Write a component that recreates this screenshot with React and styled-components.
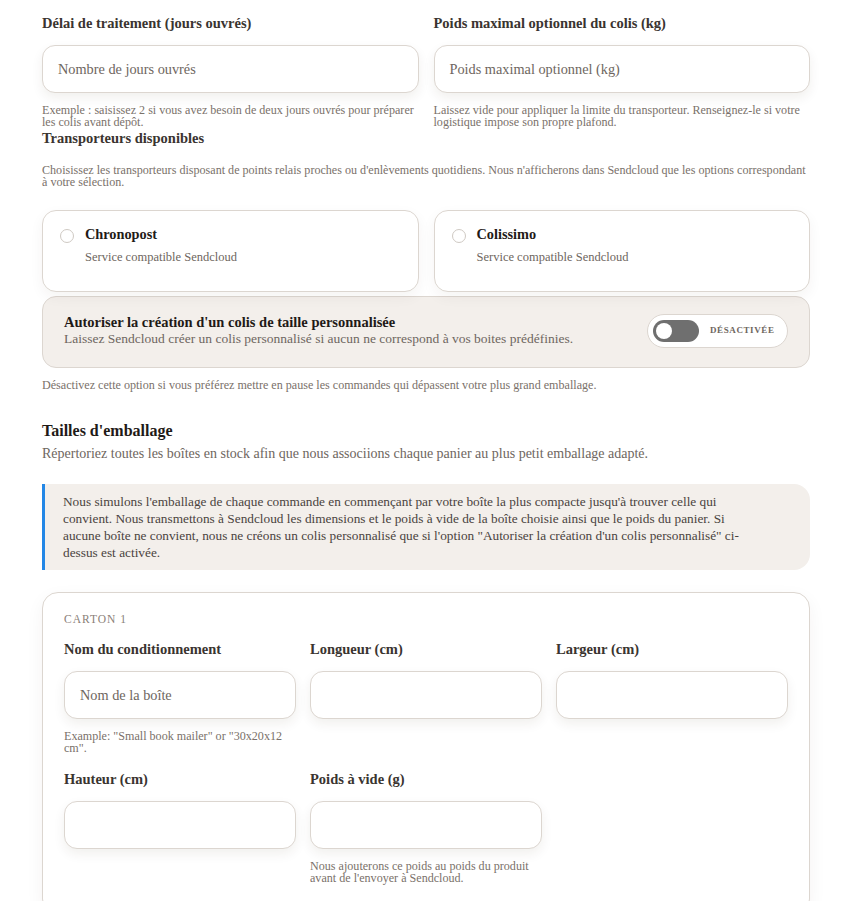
import React from "react";
import styled, { createGlobalStyle } from "styled-components";

const Global = createGlobalStyle`
  html, body { margin: 0; padding: 0; background: #ffffff; }
  body { font-family: "Liberation Serif", "DejaVu Serif", serif; color: #3a3430; }
  * { box-sizing: border-box; }
`;

const Page = styled.div`
  width: 768px;
  margin-left: 42px;
  padding-top: 14px;
  padding-bottom: 40px;
`;

const TwoCols = styled.div`
  display: grid;
  grid-template-columns: 1fr 1fr;
  column-gap: 15px;
  margin-top: ${(p) => p.$mt || 0}px;
`;

const Field = styled.div`
  display: flex;
  flex-direction: column;
`;

const Label = styled.div`
  font-size: 14.5px;
  font-weight: 700;
  color: #3a3430;
  line-height: 18px;
  margin-bottom: 13px;
`;

const Input = styled.div`
  height: 48px;
  border: 1px solid #dcd6d0;
  border-radius: 13px;
  background: #fff;
  box-shadow: 0 5px 12px rgba(60, 40, 20, 0.07);
  display: flex;
  align-items: center;
  padding: 0 15px;
  font-size: 14.3px;
  color: #6e6660;
`;

const Help = styled.div`
  font-size: 12.1px;
  line-height: 12px;
  color: #7a716a;
  margin-top: ${(p) => p.$mt ?? 11}px;
`;

const SectionLabel = styled.div`
  font-size: 14.5px;
  font-weight: 700;
  color: #3a3430;
  line-height: 18px;
  margin-top: 1px;
`;

const Carrier = styled.div`
  height: 82px;
  border: 1px solid #dcd6d0;
  border-radius: 14px;
  background: #fff;
  box-shadow: 0 5px 14px rgba(60, 40, 20, 0.05);
  display: flex;
  align-items: flex-start;
  padding: 15px 17px;
  gap: 11px;
`;

const Radio = styled.span`
  width: 14px;
  height: 14px;
  border-radius: 50%;
  border: 1px solid #cfc9c3;
  background: #fff;
  flex: none;
  margin-top: 3px;
`;

const CarrierText = styled.div`
  display: flex;
  flex-direction: column;
`;

const CarrierName = styled.div`
  font-size: 14.3px;
  font-weight: 700;
  color: #1f1a17;
  line-height: 17px;
`;

const CarrierSub = styled.div`
  font-size: 12.5px;
  color: #6e6660;
  margin-top: 7px;
  line-height: 15px;
`;

const TogglePanel = styled.div`
  margin-top: 4px;
  height: 72px;
  border: 1px solid #dcd6d0;
  border-radius: 14px;
  background: #f3efeb;
  display: flex;
  align-items: center;
  justify-content: space-between;
  padding: 0 21px;
`;

const ToggleBody = styled.div`
  padding-bottom: 3px;
`;

const ToggleTitle = styled.div`
  font-size: 14.5px;
  font-weight: 700;
  color: #1f1a17;
  line-height: 17px;
`;

const ToggleDesc = styled.div`
  font-size: 13.5px;
  color: #6e6660;
  line-height: 16px;
`;

const SwitchPill = styled.div`
  width: 141px;
  height: 34px;
  border: 1px solid #dcd6d0;
  border-radius: 17px;
  background: #fff;
  display: flex;
  align-items: center;
  padding: 0 5px;
  gap: 11px;
  margin-top: -2px;
`;

const Track = styled.span`
  width: 46px;
  height: 22px;
  border-radius: 11px;
  background: #6f6f6f;
  position: relative;
  flex: none;
`;

const Knob = styled.span`
  position: absolute;
  left: 3px;
  top: 3px;
  width: 16px;
  height: 16px;
  border-radius: 50%;
  background: #fff;
`;

const SwitchText = styled.span`
  font-size: 9px;
  font-weight: 700;
  letter-spacing: 0.6px;
  color: #6e6660;
  margin-top: -2px;
`;

const SectionTitle = styled.h2`
  margin: 30px 0 0;
  font-size: 16px;
  font-weight: 700;
  color: #1f1a17;
  line-height: 20px;
`;

const SectionDesc = styled.div`
  font-size: 14px;
  color: #6e6660;
  margin-top: 5px;
  line-height: 16px;
`;

const Note = styled.div`
  margin-top: 22px;
  background: #f3efeb;
  border-left: 3px solid #2387e6;
  border-radius: 0 16px 16px 0;
  padding: 9px 46px 9px 18px;
  font-size: 13.3px;
  line-height: 17px;
  color: #4a433e;
`;

const BoxCard = styled.div`
  margin-top: 22px;
  border: 1px solid #dcd6d0;
  border-radius: 16px;
  background: #fff;
  box-shadow: 0 6px 18px rgba(60, 40, 20, 0.05);
  padding: 19px 21px 30px;
`;

const BoxTag = styled.div`
  font-size: 11.5px;
  letter-spacing: 1px;
  color: #8a8078;
  text-transform: uppercase;
  line-height: 14px;
  margin-bottom: 14px;
`;

const ThreeCols = styled.div`
  display: grid;
  grid-template-columns: repeat(3, 232px);
  column-gap: 14px;
  row-gap: 16px;
  align-items: start;
`;

function TextField({ label, placeholder, help }) {
  return (
    <Field>
      <Label>{label}</Label>
      <Input>{placeholder}</Input>
      {help && <Help $mt={11}>{help}</Help>}
    </Field>
  );
}

function CarrierCard({ name }) {
  return (
    <Carrier>
      <Radio />
      <CarrierText>
        <CarrierName>{name}</CarrierName>
        <CarrierSub>Service compatible Sendcloud</CarrierSub>
      </CarrierText>
    </Carrier>
  );
}

export default function App() {
  return (
    <>
      <Global />
      <Page>
        <TwoCols>
          <TextField
            label="Délai de traitement (jours ouvrés)"
            placeholder="Nombre de jours ouvrés"
            help="Exemple : saisissez 2 si vous avez besoin de deux jours ouvrés pour préparer les colis avant dépôt."
          />
          <TextField
            label="Poids maximal optionnel du colis (kg)"
            placeholder="Poids maximal optionnel (kg)"
            help="Laissez vide pour appliquer la limite du transporteur. Renseignez-le si votre logistique impose son propre plafond."
          />
        </TwoCols>

        <SectionLabel>Transporteurs disponibles</SectionLabel>
        <Help $mt={17}>
          Choisissez les transporteurs disposant de points relais proches ou d'enlèvements quotidiens. Nous n'afficherons dans Sendcloud que les options correspondant à votre sélection.
        </Help>

        <TwoCols $mt={22}>
          <CarrierCard name="Chronopost" />
          <CarrierCard name="Colissimo" />
        </TwoCols>

        <TogglePanel>
          <ToggleBody>
            <ToggleTitle>Autoriser la création d'un colis de taille personnalisée</ToggleTitle>
            <ToggleDesc>Laissez Sendcloud créer un colis personnalisé si aucun ne correspond à vos boites prédéfinies.</ToggleDesc>
          </ToggleBody>
          <SwitchPill>
            <Track>
              <Knob />
            </Track>
            <SwitchText>DÉSACTIVÉE</SwitchText>
          </SwitchPill>
        </TogglePanel>
        <Help $mt={11}>
          Désactivez cette option si vous préférez mettre en pause les commandes qui dépassent votre plus grand emballage.
        </Help>

        <SectionTitle>Tailles d'emballage</SectionTitle>
        <SectionDesc>
          Répertoriez toutes les boîtes en stock afin que nous associions chaque panier au plus petit emballage adapté.
        </SectionDesc>

        <Note>
          Nous simulons l'emballage de chaque commande en commençant par votre boîte la plus compacte jusqu'à trouver celle qui convient. Nous transmettons à Sendcloud les dimensions et le poids à vide de la boîte choisie ainsi que le poids du panier. Si aucune boîte ne convient, nous ne créons un colis personnalisé que si l'option "Autoriser la création d'un colis personnalisé" ci-dessus est activée.
        </Note>

        <BoxCard>
          <BoxTag>Carton 1</BoxTag>
          <ThreeCols>
            <TextField
              label="Nom du conditionnement"
              placeholder="Nom de la boîte"
              help={`Example: "Small book mailer" or "30x20x12 cm".`}
            />
            <TextField label="Longueur (cm)" />
            <TextField label="Largeur (cm)" />
            <TextField label="Hauteur (cm)" />
            <TextField
              label="Poids à vide (g)"
              help="Nous ajouterons ce poids au poids du produit avant de l'envoyer à Sendcloud."
            />
          </ThreeCols>
        </BoxCard>
      </Page>
    </>
  );
}
